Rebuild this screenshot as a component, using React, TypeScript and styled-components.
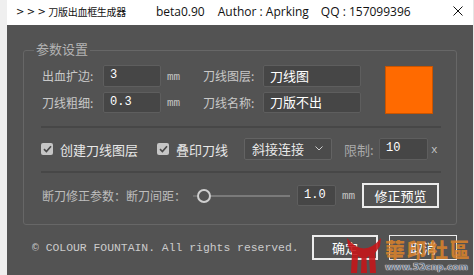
import React from "react";
import styled, { createGlobalStyle } from "styled-components";

const Global = createGlobalStyle`
  html, body { margin: 0; padding: 0; background: #efefef; }
  body { width: 474px; height: 275px; overflow: hidden; }
  * { box-sizing: border-box; }
`;

const CJK = `"Noto Sans CJK SC", "Open Sans", sans-serif`;
const MONO = `"Liberation Mono", "DejaVu Sans Mono", monospace`;

const Screen = styled.div`
  position: relative;
  display: flex;
  width: 474px;
  height: 275px;
  background: #efefef;
  overflow: hidden;
`;

const LeftEdge = styled.div`
  width: 7px;
  background: #efefef;
`;

const RightEdge = styled.div`
  width: 1px;
  background: #e6e6e6;
`;

const Window = styled.div`
  flex: 1;
  display: flex;
  flex-direction: column;
`;

const TitleBar = styled.div`
  height: 25px;
  background: #ffffff;
  display: flex;
  align-items: center;
  padding: 0 10px 3px 9px;
  color: #111;
  font-family: "Open Sans", ${CJK};
  font-size: 12px;
  white-space: nowrap;
`;

const Arrows = styled.span`
  font-size: 10px;
  letter-spacing: 2.4px;
  font-family: "DejaVu Sans", sans-serif;
`;

const TitleCJK = styled.span`
  font-family: ${CJK};
  font-size: 10px;
  letter-spacing: -0.3px;
`;

const TitlePart = styled.span<{ $gap: number }>`
  margin-left: ${(p) => p.$gap}px;
`;

const CloseBtn = styled.div`
  margin-left: auto;
  width: 10px;
  height: 10px;
  display: flex;
`;

const Body = styled.div`
  flex: 1;
  background: #535353;
  padding: 0 16px;
  display: flex;
  flex-direction: column;
`;

const GroupBox = styled.div`
  position: relative;
  margin-top: 25px;
  border: 1px solid #676767;
  border-radius: 3px;
  padding: 14px 15px 16px 17px;
  display: flex;
  flex-direction: column;
`;

const Legend = styled.div`
  position: absolute;
  top: -9px;
  left: 10px;
  padding: 0 2px;
  background: #535353;
  color: #b3b3b3;
  font-family: ${CJK};
  font-size: 13px;
  line-height: 14px;
`;

const TopSection = styled.div`
  display: flex;
  align-items: flex-start;
`;

const FieldsCol = styled.div`
  display: flex;
  flex-direction: column;
  gap: 5px;
`;

const FieldRow = styled.div<{ $h: number }>`
  display: flex;
  align-items: center;
  height: ${(p) => p.$h}px;
`;

const Label = styled.div<{ $w: number; $color?: string; $size?: number; $ml?: number }>`
  width: ${(p) => p.$w}px;
  flex: none;
  margin-left: ${(p) => p.$ml || 0}px;
  padding-left: 1px;
  color: ${(p) => p.$color || "#c8c8c8"};
  font-family: ${CJK};
  font-size: ${(p) => p.$size || 12}px;
  white-space: nowrap;
  line-height: 1;
`;

const TextBox = styled.div<{ $w: number; $mono?: boolean; $h?: number }>`
  width: ${(p) => p.$w}px;
  height: ${(p) => (p.$h ? `${p.$h}px` : "100%")};
  flex: none;
  background: #464646;
  border: 1px solid #5e5e5e;
  border-radius: 2px;
  padding: 0 0 2px 6px;
  display: flex;
  align-items: center;
  color: #ffffff;
  font-family: ${(p) => (p.$mono ? MONO : CJK)};
  font-size: ${(p) => (p.$mono ? 12 : 13)}px;
  white-space: nowrap;
`;

const Unit = styled.div<{ $w: number; $pl?: number; $ml?: number }>`
  width: ${(p) => p.$w}px;
  flex: none;
  margin-left: ${(p) => p.$ml || 0}px;
  padding-left: ${(p) => p.$pl || 0}px;
  color: #c4c4c4;
  font-family: ${MONO};
  font-size: 11px;
  line-height: 1;
  padding-top: 2px;
`;

const ColorSwatch = styled.div`
  width: 48px;
  height: 48px;
  margin-left: 24px;
  margin-top: 1px;
  background: #ff6a00;
  border: 1px solid #c95400;
`;

const Separator = styled.div<{ $mt: number }>`
  height: 2px;
  margin-top: ${(p) => p.$mt}px;
  background: #474747;
`;

const ControlRow = styled.div<{ $h: number; $mt: number }>`
  display: flex;
  align-items: center;
  height: ${(p) => p.$h}px;
  margin-top: ${(p) => p.$mt}px;
`;

const CheckItem = styled.div<{ $w: number }>`
  width: ${(p) => p.$w}px;
  flex: none;
  display: flex;
  align-items: center;
  gap: 7px;
  color: #e8e8e8;
  font-family: ${CJK};
  font-size: 13px;
  white-space: nowrap;
`;

const CheckBox = styled.div`
  width: 12px;
  height: 12px;
  border-radius: 2px;
  background: #c6c6c6;
  display: flex;
  align-items: center;
  justify-content: center;
`;

const Select = styled.div`
  width: 88px;
  height: 100%;
  flex: none;
  background: #4b4b4b;
  border: 1px solid #636363;
  border-radius: 2px;
  padding: 0 8px 1px 7px;
  display: flex;
  align-items: center;
  justify-content: space-between;
  color: #e8e8e8;
  font-family: ${CJK};
  font-size: 13px;
`;

const Slider = styled.div`
  width: 104px;
  flex: none;
  display: flex;
  align-items: center;
  padding-right: 7px;
`;

const TrackStub = styled.div`
  width: 4px;
  height: 2px;
  background: #6e6e6e;
`;

const Thumb = styled.div`
  width: 14px;
  height: 14px;
  flex: none;
  border-radius: 50%;
  border: 2px solid #cfcfcf;
  background: #535353;
`;

const TrackLine = styled.div`
  flex: 1;
  height: 2px;
  background: #7a7a7a;
`;

const OutlineButton = styled.div<{ $w: number; $bw: number; $ml?: number }>`
  width: ${(p) => p.$w}px;
  height: 100%;
  flex: none;
  margin-left: ${(p) => p.$ml || 0}px;
  border: ${(p) => p.$bw}px solid #ececec;
  display: flex;
  align-items: center;
  justify-content: center;
  padding-bottom: 1px;
  color: #ffffff;
  font-family: ${CJK};
  font-size: 13px;
`;

const Footer = styled.div`
  display: flex;
  align-items: center;
  height: 25px;
  margin-top: 10px;
`;

const Copyright = styled.div`
  flex: 1;
  padding-left: 9px;
  color: #cbcbcb;
  font-family: ${MONO};
  font-size: 11.4px;
  white-space: nowrap;
`;

const Watermark = styled.div`
  position: absolute;
  left: 347px;
  top: 237px;
  display: flex;
  align-items: flex-start;
  gap: 4px;
  pointer-events: none;
`;

const WmText = styled.div`
  display: flex;
  flex-direction: column;
  align-items: flex-start;
`;

const WmTitle = styled.div`
  font-family: "Noto Sans CJK TC", "Noto Sans CJK SC", sans-serif;
  font-weight: 900;
  font-size: 20px;
  line-height: 25px;
  letter-spacing: 1.5px;
  color: rgba(222, 132, 42, 0.85);
`;

const WmUrl = styled.div`
  font-family: "DejaVu Sans", sans-serif;
  font-weight: bold;
  font-size: 9px;
  line-height: 10px;
  color: #6c7886;
  text-shadow: 0 0 1px #fff, 0 0 1px #fff;
`;

const Check = () => (
  <svg width="9" height="8" viewBox="0 0 9 8">
    <path d="M1 4.2 L3.4 6.5 L8 1.3" fill="none" stroke="#4a4a4a" strokeWidth="1.7" />
  </svg>
);

export default function App() {
  return (
    <>
      <Global />
      <Screen>
        <LeftEdge />
        <Window>
          <TitleBar>
            <Arrows>&gt;&gt;&gt;</Arrows>
            <TitleCJK>刀版出血框生成器</TitleCJK>
            <TitlePart $gap={30}>beta0.90</TitlePart>
            <TitlePart $gap={13}>Author : Aprking</TitlePart>
            <TitlePart $gap={12}>QQ : 157099396</TitlePart>
            <CloseBtn>
              <svg width="10" height="10" viewBox="0 0 10 10">
                <path d="M0.5 0.5 L9.5 9.5 M9.5 0.5 L0.5 9.5" stroke="#111" strokeWidth="1" />
              </svg>
            </CloseBtn>
          </TitleBar>
          <Body>
            <GroupBox>
              <Legend>参数设置</Legend>
              <TopSection>
                <FieldsCol>
                  <FieldRow $h={22}>
                    <Label $w={62}>出血扩边:</Label>
                    <TextBox $w={58} $mono>3</TextBox>
                    <Unit $w={41} $pl={6}>mm</Unit>
                    <Label $w={61}>刀线图层:</Label>
                    <TextBox $w={98}>刀线图</TextBox>
                  </FieldRow>
                  <FieldRow $h={21}>
                    <Label $w={62}>刀线粗细:</Label>
                    <TextBox $w={58} $mono>0.3</TextBox>
                    <Unit $w={41} $pl={6}>mm</Unit>
                    <Label $w={61}>刀线名称:</Label>
                    <TextBox $w={98}>刀版不出</TextBox>
                  </FieldRow>
                </FieldsCol>
                <ColorSwatch />
              </TopSection>
              <Separator $mt={12} />
              <ControlRow $h={22} $mt={10}>
                <CheckItem $w={116}>
                  <CheckBox><Check /></CheckBox>
                  创建刀线图层
                </CheckItem>
                <CheckItem $w={87}>
                  <CheckBox><Check /></CheckBox>
                  叠印刀线
                </CheckItem>
                <Select>
                  斜接连接
                  <svg width="8" height="5" viewBox="0 0 8 5">
                    <path d="M0.5 0.5 L4 4 L7.5 0.5" fill="none" stroke="#cfcfcf" strokeWidth="1" />
                  </svg>
                </Select>
                <Label $w={36} $ml={11} $color="#a9a9a9" $size={13}>限制:</Label>
                <TextBox $w={49} $mono>10</TextBox>
                <Unit $w={10} $ml={3}>x</Unit>
              </ControlRow>
              <Separator $mt={11} />
              <ControlRow $h={25} $mt={10}>
                <Label $w={152} $color="#bdbdbd" $size={12}>断刀修正参数：断刀间距：</Label>
                <Slider>
                  <TrackStub />
                  <Thumb />
                  <TrackLine />
                </Slider>
                <TextBox $w={39} $mono $h={21}>1.0</TextBox>
                <Unit $w={26} $pl={6}>mm</Unit>
                <OutlineButton $w={77} $bw={2}>修正预览</OutlineButton>
              </ControlRow>
            </GroupBox>
            <Footer>
              <Copyright>© COLOUR FOUNTAIN. All rights reserved.</Copyright>
              <OutlineButton $w={66} $bw={2}>确定</OutlineButton>
              <OutlineButton $w={68} $bw={1} $ml={11}>取消</OutlineButton>
            </Footer>
          </Body>
        </Window>
        <RightEdge />
        <Watermark>
          <svg width="34" height="37" viewBox="0 0 34 37">
            <path
              d="M0 1 Q17 22 34 1 L33 9 Q29 15 28 16 L29 36 L23 36 L22 19 Q19 21 19.5 21 L20 36 L14 36 L14.5 21 Q12 20 11 19 L10 36 L4 36 L5 16 Q2 12 1 9 Z"
              fill="rgba(196, 22, 26, 0.9)"
            />
          </svg>
          <WmText>
            <WmTitle>華印社區</WmTitle>
            <WmUrl>www.52cnp.com</WmUrl>
          </WmText>
        </Watermark>
      </Screen>
    </>
  );
}
